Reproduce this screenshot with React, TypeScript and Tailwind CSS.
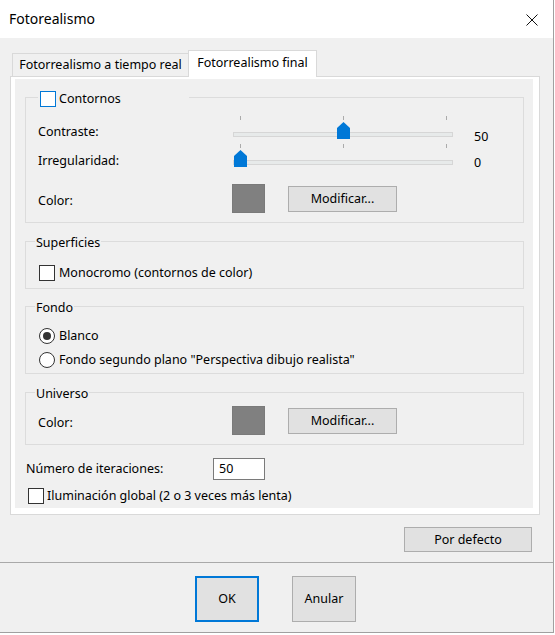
import React from "react";

function CheckBox({ blue = false }: { blue?: boolean }) {
  return (
    <span
      className={
        blue
          ? "block w-[16px] h-[16px] shrink-0 bg-white border border-[#0078d7]"
          : "block w-[16px] h-[16px] shrink-0 bg-white border border-[#333333]"
      }
    />
  );
}

function Radio({ checked = false }: { checked?: boolean }) {
  return (
    <span className="flex items-center justify-center w-[16px] h-[16px] shrink-0 rounded-full bg-white border border-[#333333]">
      {checked && <span className="block w-[8px] h-[8px] rounded-full bg-[#333333]" />}
    </span>
  );
}

function Slider({ value }: { value: number }) {
  // thumb centre runs from the first tick (7px) to the last (213px)
  const left = 7 + (206 * value) / 100 - 6.5;
  return (
    <div className="relative w-[220px] h-[23px] shrink-0">
      <span className="absolute top-0 left-[7px] w-px h-[4px] bg-[#ababab]" />
      <span className="absolute top-0 left-[110px] w-px h-[4px] bg-[#ababab]" />
      <span className="absolute top-0 left-[213px] w-px h-[4px] bg-[#ababab]" />
      <div className="absolute left-0 right-0 top-[16px] h-[5px] bg-[#e7eaea] border border-[#d6d6d6]" />
      <svg className="absolute top-[6px]" style={{ left }} width="13" height="17" viewBox="0 0 13 17">
        <polygon points="0,6 6.5,0 13,6 13,17 0,17" fill="#0078d7" />
      </svg>
    </div>
  );
}

function Button({ label, className }: { label: string; className: string }) {
  return (
    <button className={`flex items-center justify-center shrink-0 bg-[#e1e1e1] border border-[#adadad] leading-[18px] ${className}`}>
      {label}
    </button>
  );
}

function Group({
  legend,
  className,
  children,
}: {
  legend: string;
  className: string;
  children: React.ReactNode;
}) {
  return (
    <div className={`relative ml-[10px] w-[499px] shrink-0 border border-[#dcdcdc] ${className}`}>
      <div className="absolute -top-[8px] left-[9px] px-[1px] bg-[#f0f0f0] leading-[18px]">{legend}</div>
      {children}
    </div>
  );
}

function ColorRow() {
  return (
    <div className="flex items-center h-[29px] pl-[12px]">
      <span className="self-start mt-[8px] w-[194px] shrink-0">Color:</span>
      <span className="block w-[33px] h-[29px] shrink-0 bg-[#808080] border border-[#7a7a7a]" />
      <Button label="Modificar..." className="ml-[23px] w-[109px] h-[26px]" />
    </div>
  );
}

export default function App() {
  return (
    <div className="w-[555px] h-[635px] bg-white font-['Noto_Sans',sans-serif] text-[12.5px] text-black">
      <div className="flex flex-col w-[554px] h-[633px] border-r border-b border-[#a0a0a0]">
        {/* title bar */}
        <div className="flex items-center justify-between h-[38px] shrink-0 bg-white pl-[9px] pr-[15px]">
          <span className="text-[14px] leading-[20px]">Fotorealismo</span>
          <svg width="12" height="12" viewBox="0 0 12 12" className="mt-[1px]">
            <path d="M0.5 0.5 L11.5 11.5 M11.5 0.5 L0.5 11.5" stroke="#111" strokeWidth="1" fill="none" />
          </svg>
        </div>

        <div className="flex flex-col flex-1 bg-[#f0f0f0]">
          {/* tabs */}
          <div className="flex items-end h-[26px] mt-[12px] ml-[12px] shrink-0">
            <div className="flex items-center justify-center w-[176px] h-[23px] border-t border-l border-[#d9d9d9] bg-[#f0f0f0] leading-[18px]">
              Fotorrealismo a tiempo real
            </div>
            <div className="relative z-10 flex items-center justify-center w-[129px] h-[27px] -mb-[1px] border-t border-l border-r border-[#d9d9d9] bg-white leading-[18px] pb-[2px]">
              Fotorrealismo final
            </div>
          </div>

          {/* tab page */}
          <div className="ml-[10px] w-[530px] h-[439px] shrink-0 border border-[#d9d9d9] bg-white pl-[4px] pt-[2px] pr-[6px] pb-[6px]">
            <div className="flex flex-col h-full bg-[#f0f0f0]">
              <div className="relative mt-[18px] ml-[10px] w-[499px] h-[126px] shrink-0 border border-[#dcdcdc]">
                <div className="absolute -top-[8px] left-[12px] w-[151px] h-[18px] flex items-center gap-[3px] pl-[2px] bg-[#f0f0f0] leading-[18px]">
                  <CheckBox blue />
                  <span>Contornos</span>
                </div>
                <div className="flex h-[23px] mt-[18px] pl-[12px]">
                  <span className="mt-[7px] w-[195px] shrink-0 leading-[18px]">Contraste:</span>
                  <Slider value={50} />
                  <span className="ml-[21px] mt-[12px] leading-[18px]">50</span>
                </div>
                <div className="flex h-[23px] mt-[5px] pl-[12px]">
                  <span className="mt-[8px] w-[195px] shrink-0 leading-[18px]">Irregularidad:</span>
                  <Slider value={0} />
                  <span className="ml-[21px] mt-[10px] leading-[18px]">0</span>
                </div>
                <div className="mt-[17px] leading-[18px]">
                  <ColorRow />
                </div>
              </div>

              <Group legend="Superficies" className="mt-[18px] h-[48px] leading-[18px]">
                <div className="flex items-center gap-[4px] mt-[22px] pl-[13px]">
                  <CheckBox />
                  <span>Monocromo (contornos de color)</span>
                </div>
              </Group>

              <Group legend="Fondo" className="mt-[17px] h-[68px] leading-[18px]">
                <div className="flex flex-col gap-[8px] mt-[21px] pl-[13px]">
                  <div className="flex items-center gap-[4px] h-[16px]">
                    <Radio checked />
                    <span>Blanco</span>
                  </div>
                  <div className="flex items-center gap-[4px] h-[16px]">
                    <Radio />
                    <span>Fondo segundo plano "Perspectiva dibujo realista"</span>
                  </div>
                </div>
              </Group>

              <Group legend="Universo" className="mt-[18px] h-[53px] leading-[18px]">
                <div className="mt-[13px]">
                  <ColorRow />
                </div>
              </Group>

              <div className="flex items-center h-[22px] mt-[13px] ml-[11px] leading-[18px]">
                <span className="w-[187px] shrink-0">Número de iteraciones:</span>
                <div className="flex items-center w-[52px] h-[22px] pl-[5px] bg-white border border-[#7a7a7a]">50</div>
              </div>

              <div className="flex items-center gap-[3px] mt-[7px] ml-[13px] leading-[18px]">
                <CheckBox />
                <span>Iluminación global (2 o 3 veces más lenta)</span>
              </div>
            </div>
          </div>

          {/* footer */}
          <Button label="Por defecto" className="self-end mr-[21px] mt-[12px] w-[128px] h-[25px]" />
          <div className="mt-[10px] h-px shrink-0 bg-[#a9a9a9]" />
          <div className="flex gap-[33px] pl-[195px] mt-[13px]">
            <button className="flex items-center justify-center w-[64px] h-[46px] bg-[#e1e1e1] border-2 border-[#0078d7] leading-[18px]">
              OK
            </button>
            <Button label="Anular" className="w-[64px] h-[46px]" />
          </div>
        </div>
      </div>
    </div>
  );
}
